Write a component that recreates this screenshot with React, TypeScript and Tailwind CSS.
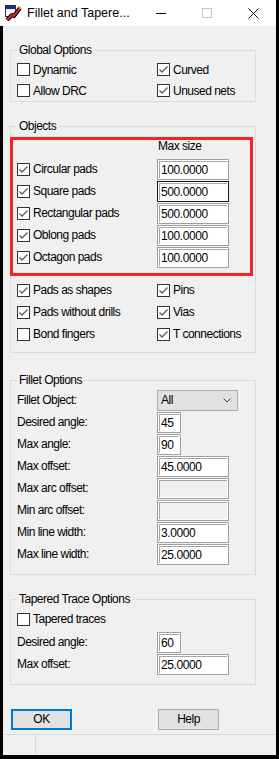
import React from 'react';
import clsx from 'clsx';

const CheckBox: React.FC<{ checked?: boolean; label: string }> = ({ checked, label }) => (
  <div className="flex items-center">
    <div className="w-[13px] h-[13px] border border-[#333333] bg-white flex items-center justify-center">
      {checked && (
        <svg width="11" height="11" viewBox="0 0 11 11">
          <path d="M1.5 5.5 L4 8 L9.5 2.5" fill="none" stroke="#5a5a5a" strokeWidth="1.3" />
        </svg>
      )}
    </div>
    <span className="ml-[3px] whitespace-nowrap">{label}</span>
  </div>
);

const Field: React.FC<{ value?: string; className: string; focused?: boolean; disabled?: boolean }> = ({
  value,
  className,
  focused,
  disabled,
}) => (
  <div
    className={clsx(
      'h-[21px] border p-[1px] bg-white',
      focused ? 'border-[#1a1a1a]' : 'border-[#a0a0a0]',
      disabled && 'bg-[#f4f4f4]',
      className
    )}
  >
    <div
      className={clsx(
        'h-full border-t border-l border-[#a8a8a8] pl-[1px] leading-[16px] tracking-[-0.4px]',
        disabled ? 'bg-[#f0f0f0]' : 'bg-white'
      )}
    >
      {value}
    </div>
  </div>
);

const Group: React.FC<{ title: string; className?: string; children: React.ReactNode }> = ({
  title,
  className,
  children,
}) => (
  <div className={clsx('ml-[7px] w-[246px] border border-[#dcdcdc]', className)}>
    <div className="-mt-[7px] ml-[6px] w-fit bg-[#f0f0f0] px-[2px] leading-[13px]">{title}</div>
    {children}
  </div>
);

const Row: React.FC<{ label: string; children?: React.ReactNode }> = ({ label, children }) => (
  <div className="h-[22px] flex items-center pl-[6px]">
    <span className="w-[140px] whitespace-nowrap">{label}</span>
    {children}
  </div>
);

const pads = [
  ['Circular pads', '100.0000'],
  ['Square pads', '500.0000'],
  ['Rectangular pads', '500.0000'],
  ['Oblong pads', '100.0000'],
  ['Octagon pads', '100.0000'],
];

const AppIcon = () => (
  <svg width="17" height="16" viewBox="0 0 17 16">
    <rect x="0.5" y="0.5" width="10" height="11" fill="#ffffff" stroke="#1b2a7a" />
    <rect x="1" y="1" width="9" height="3" fill="#1b2a7a" />
    <path d="M2 15 L7 10 L9 11 L15 3" fill="none" stroke="#000000" strokeWidth="4" strokeLinejoin="round" />
    <path d="M2 15 L7 10 L9 11 L15 3" fill="none" stroke="#e8202a" strokeWidth="2" strokeLinejoin="round" />
    <path d="M13 1 L16 2 L15 5" fill="#f2b21b" stroke="none" />
  </svg>
);

export default function App() {
  return (
    <div className="w-[279px] h-[759px] bg-black font-['Liberation_Sans',sans-serif] text-[12px] tracking-[-0.5px] text-black overflow-hidden">
      {/* title bar */}
      <div className="w-[276px] h-[26px] bg-white flex items-center tracking-normal">
        <div className="ml-[5px] mt-[-1px]">
          <AppIcon />
        </div>
        <span className="ml-[5px] text-[12.5px] whitespace-nowrap">Fillet and Tapere...</span>
        <div className="ml-auto flex items-center h-full">
          <div className="w-[46px] h-full flex items-center justify-center">
            <div className="w-[10px] h-px bg-black" />
          </div>
          <div className="w-[46px] h-full flex items-center justify-center">
            <div className="w-[10px] h-[10px] border border-[#c4c4c4]" />
          </div>
          <div className="w-[46px] h-full flex items-center justify-center">
            <svg width="11" height="11" viewBox="0 0 11 11">
              <path d="M0.5 0.5 L10.5 10.5 M10.5 0.5 L0.5 10.5" stroke="#111111" strokeWidth="1" />
            </svg>
          </div>
        </div>
      </div>

      {/* body */}
      <div className="ml-[3px] w-[273px] h-[729px] bg-[#f0f0f0] flex flex-col">
        <Group title="Global Options" className="mt-[24px]">
          <div className="pt-[2px] pl-[6px]">
            <div className="h-[21px] flex items-center">
              <div className="w-[140px]">
                <CheckBox label="Dynamic" />
              </div>
              <CheckBox checked label="Curved" />
            </div>
            <div className="h-[21px] flex items-center">
              <div className="w-[140px]">
                <CheckBox label="Allow DRC" />
              </div>
              <CheckBox checked label="Unused nets" />
            </div>
          </div>
        </Group>

        <Group title="Objects" className="mt-[24px] pb-[7px]">
          <div className="mt-[4px] ml-[-1px] w-[243px] border-[3px] border-[#ff1f1f] pl-[4px] pb-[5px]">
            <div className="h-[13px] leading-[13px] pl-[141px]">Max size</div>
            <div className="mt-[5px]">
              {pads.map(([label, value], i) => (
                <div key={label} className="h-[22px] flex items-center">
                  <div className="w-[140px]">
                    <CheckBox checked label={label} />
                  </div>
                  <Field value={value} className="w-[72px]" focused={i === 1} />
                </div>
              ))}
            </div>
          </div>
          <div className="mt-[3px] pl-[6px]">
            <div className="h-[22px] flex items-center">
              <div className="w-[140px]">
                <CheckBox checked label="Pads as shapes" />
              </div>
              <CheckBox checked label="Pins" />
            </div>
            <div className="h-[22px] flex items-center">
              <div className="w-[140px]">
                <CheckBox checked label="Pads without drills" />
              </div>
              <CheckBox checked label="Vias" />
            </div>
            <div className="h-[22px] flex items-center">
              <div className="w-[140px]">
                <CheckBox label="Bond fingers" />
              </div>
              <CheckBox checked label="T connections" />
            </div>
          </div>
        </Group>

        <Group title="Fillet Options" className="mt-[27px] pb-[9px]">
          <div className="mt-[2px]">
            <Row label="Fillet Object:">
              <div className="w-[81px] h-[21px] border border-[#adadad] bg-[#e1e1e1] flex items-center pl-[3px] pr-[6px]">
                <span>All</span>
                <svg className="ml-auto" width="8" height="5" viewBox="0 0 8 5">
                  <path d="M0.5 0.5 L4 4 L7.5 0.5" fill="none" stroke="#444444" strokeWidth="1" />
                </svg>
              </div>
            </Row>
            <Row label="Desired angle:">
              <Field value="45" className="w-[24px]" />
            </Row>
            <Row label="Max angle:">
              <Field value="90" className="w-[24px]" />
            </Row>
            <Row label="Max offset:">
              <Field value="45.0000" className="w-[72px]" />
            </Row>
            <Row label="Max arc offset:">
              <Field className="w-[72px]" disabled />
            </Row>
            <Row label="Min arc offset:">
              <Field className="w-[72px]" disabled />
            </Row>
            <Row label="Min line width:">
              <Field value="3.0000" className="w-[72px]" />
            </Row>
            <Row label="Max line width:">
              <Field value="25.0000" className="w-[72px]" />
            </Row>
          </div>
        </Group>

        <Group title="Tapered Trace Options" className="mt-[24px] pb-[9px]">
          <div className="mt-[1px] h-[24px] flex items-center pl-[6px]">
            <CheckBox label="Tapered traces" />
          </div>
          <Row label="Desired angle:">
            <Field value="60" className="w-[24px]" />
          </Row>
          <Row label="Max offset:">
            <Field value="25.0000" className="w-[72px]" />
          </Row>
        </Group>

        <div className="mt-[24px] flex h-[21px]">
          <button className="ml-[8px] w-[61px] h-[21px] border-2 border-[#0078d7] bg-[#e1e1e1] leading-[17px]">
            OK
          </button>
          <button className="ml-[86px] w-[61px] h-[21px] border border-[#adadad] bg-[#e1e1e1] leading-[19px]">
            Help
          </button>
        </div>

        <div className="mt-[4px] h-[21px] border-t border-[#d9d9d9] flex">
          <div className="w-[33px] border-r border-[#d9d9d9]" />
        </div>
      </div>
    </div>
  );
}
